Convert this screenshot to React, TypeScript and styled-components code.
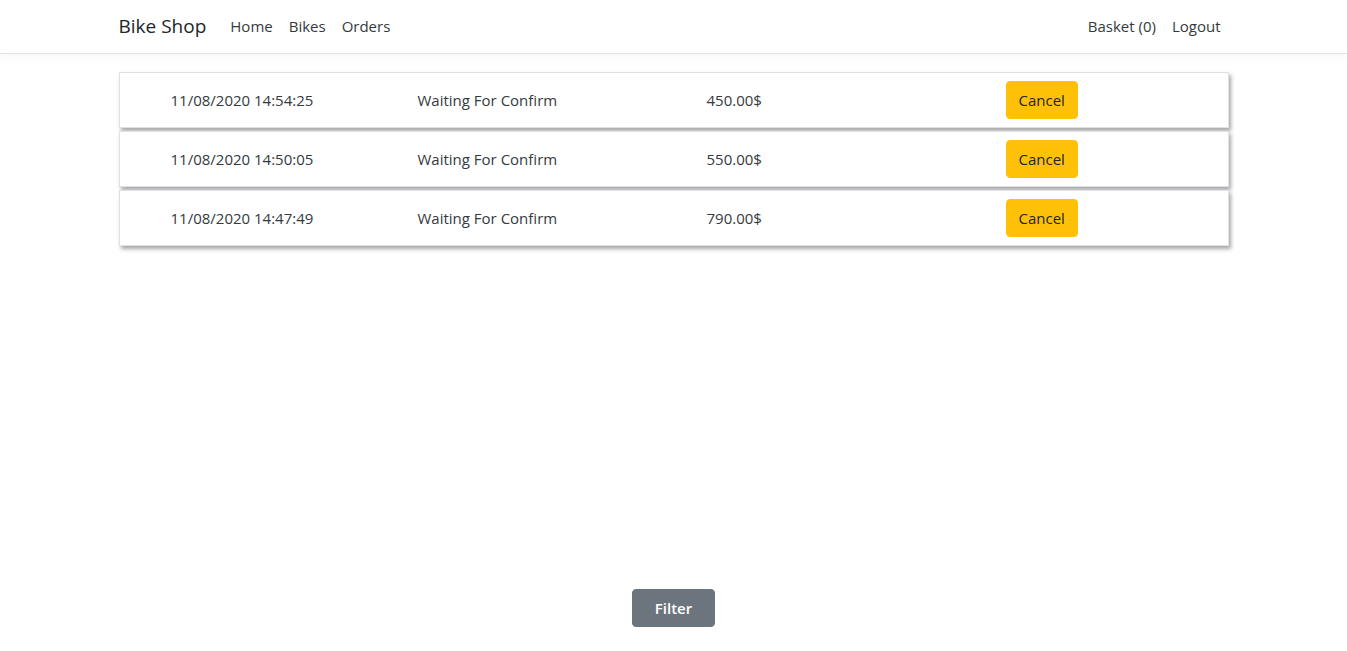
import React from 'react'
import styled, { createGlobalStyle } from 'styled-components'

const GlobalStyle = createGlobalStyle`
    html, body {
        margin: 0;
        padding: 0;
    }
    body {
        font-family: "Open Sans", "Noto Sans", "Liberation Sans", sans-serif;
        font-size: 16px;
        line-height: 1.5;
        color: #212529;
        background: #fff;
    }
`

const Page = styled.div`
    min-height: 100vh;
    display: flex;
    flex-direction: column;
`

const NavBar = styled.nav`
    height: 53px;
    border-bottom: 1px solid #dee2e6;
    box-shadow: 0 2px 14px rgba(0, 0, 0, 0.04);
    display: flex;
    justify-content: center;
`

const Container = styled.div`
    width: 1140px;
    padding: 0 15px;
    box-sizing: border-box;
    display: flex;
    align-items: center;
`

const Brand = styled.a`
    font-size: 19px;
    color: #212529;
    margin-right: 16px;
    padding: 3px 0;
`

const NavLinks = styled.div`
    display: flex;
    align-items: center;
    margin-left: ${props => (props.$right ? 'auto' : '0')};
`

const NavLink = styled.a`
    padding: 8px;
    color: #343a40;
    font-size: 15px;
`

const Orders = styled.main`
    display: flex;
    justify-content: center;
    padding-top: 18px;
    flex: 1;
`

const OrderList = styled.div`
    width: 1110px;
    display: flex;
    flex-direction: column;
    gap: 3px;
`

const OrderRow = styled.div`
    display: grid;
    grid-template-columns: 247px 289px 299px 1fr;
    align-items: center;
    padding: 8px 0 8px 51px;
    border: 1px solid #dee2e6;
    box-shadow: 2px 3px 4px rgba(0, 0, 0, 0.35);
    background: #fff;
    font-size: 15px;
    color: #343a40;
`

const Cell = styled.span`
    white-space: nowrap;
`

const Button = styled.button`
    font-family: inherit;
    font-size: 15px;
    line-height: 24px;
    padding: 6px ${props => props.$padX || 12}px;
    border: 1px solid ${props => props.$bg};
    border-radius: 4px;
    background: ${props => props.$bg};
    color: ${props => props.$color};
    font-weight: ${props => props.$weight || 400};
    cursor: pointer;
    justify-self: start;
`

const Footer = styled.div`
    display: flex;
    justify-content: center;
    padding-bottom: 24px;
`

const orders = [
    { date: '11/08/2020 14:54:25', status: 'Waiting For Confirm', price: '450.00$' },
    { date: '11/08/2020 14:50:05', status: 'Waiting For Confirm', price: '550.00$' },
    { date: '11/08/2020 14:47:49', status: 'Waiting For Confirm', price: '790.00$' },
]

export default function App() {
    return (
        <>
            <GlobalStyle />
            <Page>
                <NavBar>
                    <Container>
                        <Brand>Bike Shop</Brand>
                        <NavLinks>
                            <NavLink>Home</NavLink>
                            <NavLink>Bikes</NavLink>
                            <NavLink>Orders</NavLink>
                        </NavLinks>
                        <NavLinks $right>
                            <NavLink>Basket (0)</NavLink>
                            <NavLink>Logout</NavLink>
                        </NavLinks>
                    </Container>
                </NavBar>
                <Orders>
                    <OrderList>
                        {orders.map(order => (
                            <OrderRow key={order.date}>
                                <Cell>{order.date}</Cell>
                                <Cell>{order.status}</Cell>
                                <Cell>{order.price}</Cell>
                                <Button $bg="#ffc107" $color="#212529">Cancel</Button>
                            </OrderRow>
                        ))}
                    </OrderList>
                </Orders>
                <Footer>
                    <Button $bg="#6c757d" $color="#fff" $weight={600} $padX={22}>Filter</Button>
                </Footer>
            </Page>
        </>
    )
}
